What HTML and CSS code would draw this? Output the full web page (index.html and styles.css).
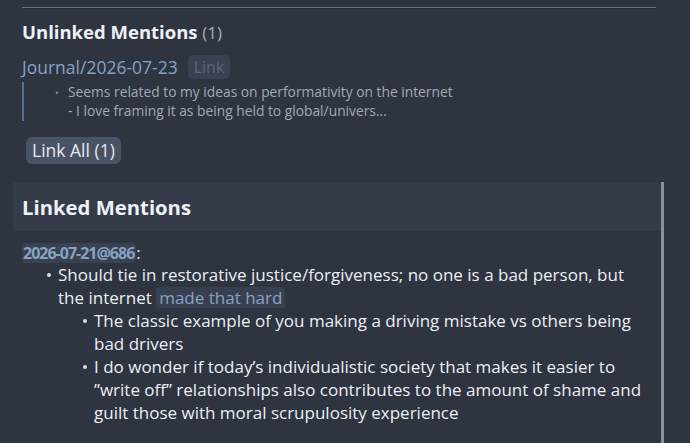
FILE: index.html
```html
<!DOCTYPE html>
<html>
<head>
<meta charset="utf-8">
<link rel="stylesheet" href="styles.css">
</head>
<body>
<div class="page">
  <div class="rule"></div>
  <section class="unlinked">
    <h2 class="title">Unlinked Mentions <span class="count">(1)</span></h2>
    <div class="ref-row">
      <span class="page-ref">Journal/2026-07-23</span>
      <span class="link-btn">Link</span>
    </div>
    <div class="quote">
      <div class="quote-line"><span class="qbullet">•</span>Seems related to my ideas on performativity on the internet</div>
      <div class="quote-line sub">- I love framing it as being held to global/univers...</div>
    </div>
    <button class="link-all">Link All (1)</button>
  </section>
  <section class="linked">
    <div class="linked-head">Linked Mentions</div>
    <div class="linked-body">
      <div class="date-row"><span class="date-ref">2026-07-21@686</span>:</div>
      <ul class="l1">
        <li>Should tie in restorative justice/forgiveness; no one is a bad person, but the internet <span class="chip">made that hard</span>
          <ul class="l2">
            <li>The classic example of you making a driving mistake vs others being bad drivers</li>
            <li>I do wonder if today’s individualistic society that makes it easier to ”write off” relationships also contributes to the amount of shame and guilt those with moral scrupulosity experience</li>
          </ul>
        </li>
      </ul>
    </div>
  </section>
</div>
</body>
</html>
```
FILE: styles.css
```css
html, body {
  margin: 0;
  padding: 0;
  background: #2e3440;
  height: 100%;
  overflow: hidden;
}
body {
  font-family: "Open Sans", Lato, sans-serif;
  color: #eceff4;
}
.page {
  width: 651px;
  padding-left: 13px;
  padding-top: 7px;
}
.rule {
  margin-left: 9px;
  width: 634px;
  height: 1px;
  background: #5f7696;
  border-bottom: 1px solid #272c36;
}
.unlinked {
  padding-left: 9px;
}
.title {
  margin: 0;
  padding-top: 11px;
  font-size: 18.5px;
  line-height: 24px;
  font-weight: 700;
  color: #eef1f6;
}
.count {
  font-weight: 400;
  font-size: 17px;
  color: #a7adb8;
}
.ref-row {
  margin-top: 10px;
  display: flex;
  align-items: center;
  gap: 10px;
  height: 24px;
}
.page-ref {
  font-size: 17.5px;
  color: #86a2c4;
}
.link-btn {
  font-size: 16px;
  color: #5b6578;
  background: #3a4150;
  border-radius: 5px;
  padding: 1px 6px;
  line-height: 22px;
}
.quote {
  margin-top: 3px;
  border-left: 2px solid #5c6f8c;
  padding: 1px 0 1px 31px;
  font-size: 13.8px;
  line-height: 18px;
  color: #a3a9b3;
}
.qbullet {
  display: inline-block;
  width: 13px;
  font-size: 10px;
  color: #8a909a;
}
.quote-line.sub {
  padding-left: 13px;
}
.link-all {
  margin: 16px 0 0 4px;
  display: block;
  font-family: inherit;
  font-size: 17.5px;
  color: #e5e9f0;
  background: #4a5266;
  border: none;
  border-radius: 6px;
  padding: 2px 6px;
  line-height: 23px;
}
.linked {
  margin-top: 18px;
  width: 648px;
  border-right: 3px solid #8b919b;
  min-height: 300px;
}
.linked-head {
  background: #353b49;
  height: 49px;
  display: flex;
  align-items: center;
  padding-left: 9px;
  font-size: 20.3px;
  font-weight: 700;
  color: #eef1f6;
}
.linked-body {
  padding: 12px 0 0 9px;
  font-size: 17px;
  line-height: 23px;
}
.date-row {
  line-height: 20px;
}
.date-ref {
  display: inline-block;
  background: #3a4150;
  color: #86a2c4;
  font-weight: 700;
  font-size: 16px;
  letter-spacing: -1px;
  border-radius: 4px;
  padding: 0 2px 0 1px;
  line-height: 20px;
}
.l1, .l2 {
  margin: 0;
  padding-left: 36px;
  list-style: none;
}
.l1 li, .l2 li {
  position: relative;
}
.l1 li::before {
  content: "";
  position: absolute;
  left: -11px;
  top: 10px;
  width: 4px;
  height: 4px;
  border-radius: 50%;
  background: #d8dee9;
}
.l1 {
  width: 594px;
}
.chip {
  display: inline-block;
  background: #38404f;
  color: #86a2c4;
  border-radius: 3px;
  padding: 0 3px;
  line-height: 21px;
}
```
